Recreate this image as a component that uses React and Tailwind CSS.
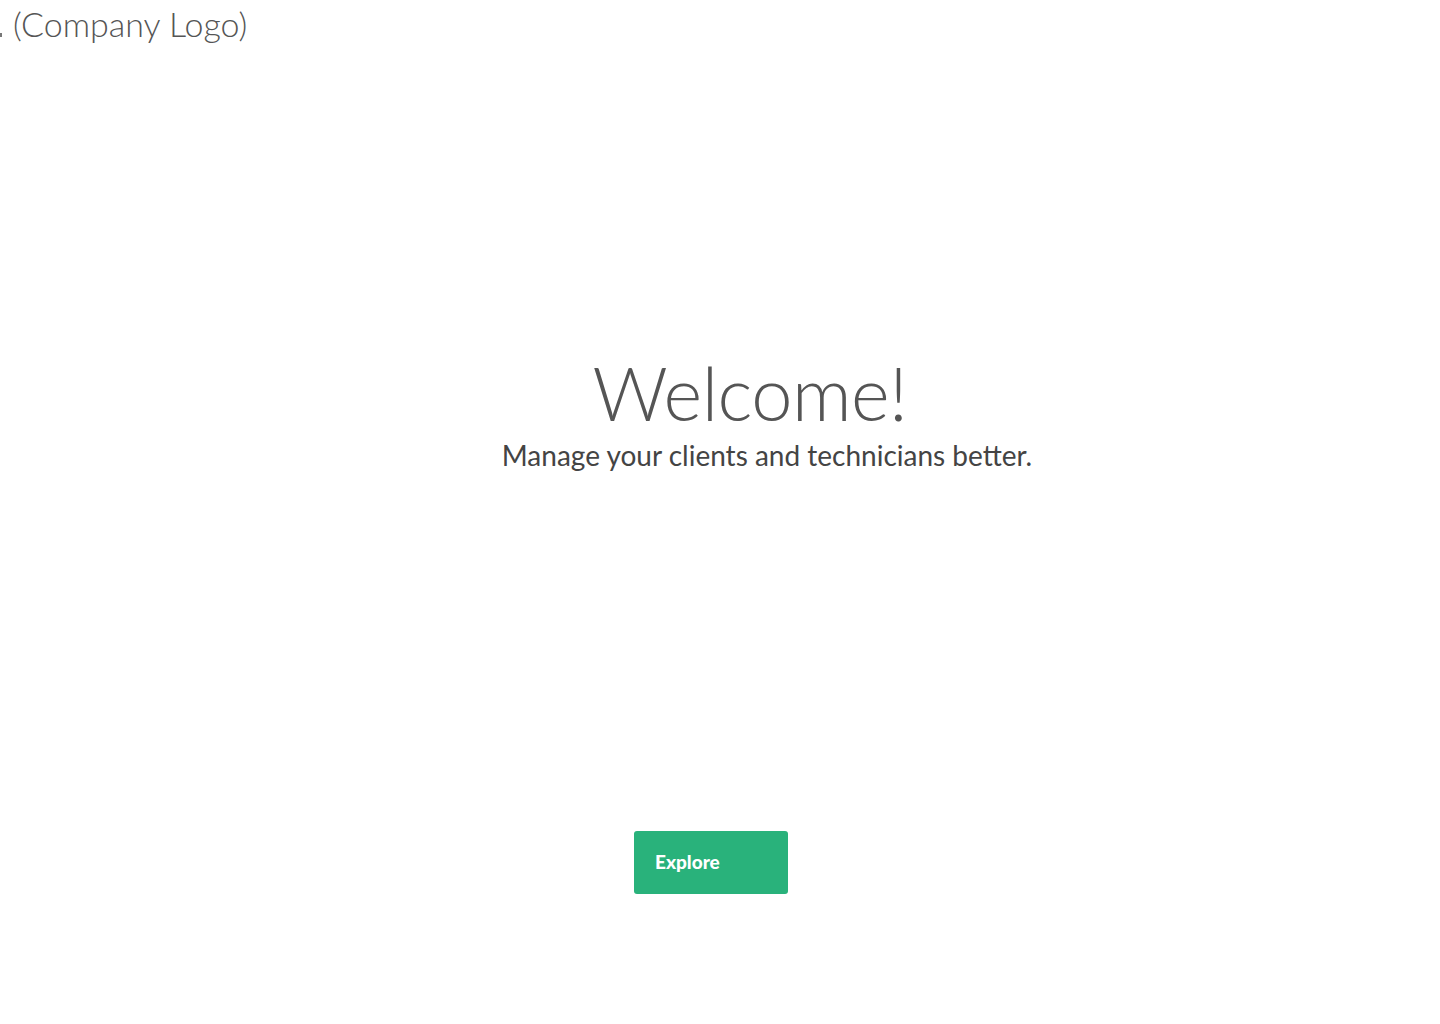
export default function App() {
  return (
    <div className="relative w-[1440px] h-[1024px] bg-white overflow-hidden" style={{ fontFamily: "Lato, 'Open Sans', sans-serif" }}>
      <div className="flex items-center h-[50px] pl-[13px] text-[34px] font-light text-[#555555] leading-none">
        <span className="absolute left-0 top-[33px] w-[2px] h-[4px] bg-[#777]" />
        <span className="-mt-[3px]">(Company Logo)</span>
      </div>
      <div className="flex flex-col items-center pt-[306px]">
        <h1 className="ml-[60px] text-[74px] font-light text-[#555555] leading-none tracking-[-0.5px]">Welcome!</h1>
        <p className="ml-[94px] mt-[11px] text-[28px] text-[#444444] leading-none">Manage your clients and technicians better.</p>
      </div>
      <div className="pl-[634px] pt-[362px]">
        <button className="w-[154px] h-[63px] rounded-[3px] bg-[#29b27b] text-white text-[19px] font-black text-left pl-[21px]">
          Explore
        </button>
      </div>
    </div>
  );
}
